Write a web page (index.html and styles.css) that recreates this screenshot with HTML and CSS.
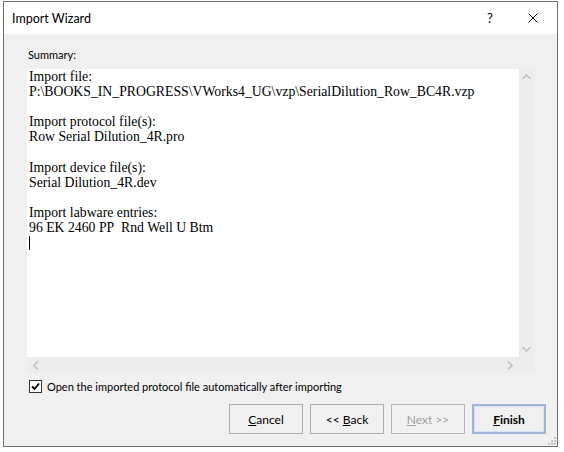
FILE: index.html
```html
<!DOCTYPE html>
<html>
<head>
<meta charset="utf-8">
<link rel="stylesheet" href="styles.css">
</head>
<body>
<div class="window">
  <div class="titlebar">
    <span class="title">Import Wizard</span>
    <span class="help">?</span>
    <span class="close">
      <svg width="10" height="10" viewBox="0 0 10 10"><path d="M0.5 0.5 L9.5 9.5 M9.5 0.5 L0.5 9.5" stroke="#000" stroke-width="1" fill="none"/></svg>
    </span>
  </div>
  <div class="content">
    <div class="label">Summary:</div>
    <div class="textbox">
      <div class="text">
        <p>Import file:<br>P:\BOOKS_IN_PROGRESS\VWorks4_UG\vzp\SerialDilution_Row_BC4R.vzp</p>
        <p>Import protocol file(s):<br>Row Serial Dilution_4R.pro</p>
        <p>Import device file(s):<br>Serial Dilution_4R.dev</p>
        <p>Import labware entries:<br>96 EK 2460 PP&nbsp; Rnd Well U Btm<br><span class="caret"></span></p>
      </div>
      <div class="vscroll">
        <svg width="9" height="6" viewBox="0 0 9 6"><path d="M0.5 5 L4.5 1 L8.5 5" stroke="#c2c2c2" stroke-width="1.6" fill="none"/></svg>
        <svg width="9" height="6" viewBox="0 0 9 6"><path d="M0.5 1 L4.5 5 L8.5 1" stroke="#c2c2c2" stroke-width="1.6" fill="none"/></svg>
      </div>
      <div class="hscroll">
        <svg width="6" height="9" viewBox="0 0 6 9"><path d="M5 0.5 L1 4.5 L5 8.5" stroke="#c2c2c2" stroke-width="1.6" fill="none"/></svg>
        <svg width="6" height="9" viewBox="0 0 6 9"><path d="M1 0.5 L5 4.5 L1 8.5" stroke="#c2c2c2" stroke-width="1.6" fill="none"/></svg>
      </div>
      <div class="corner"></div>
    </div>
    <label class="check">
      <span class="box">
        <svg width="9" height="9" viewBox="0 0 9 9"><path d="M1 4.5 L3.5 7 L8 1.5" stroke="#000" stroke-width="1.8" fill="none"/></svg>
      </span>
      <span>Open the imported protocol file automatically after importing</span>
    </label>
    <div class="buttons">
      <button class="btn"><u>C</u>ancel</button>
      <button class="btn">&lt;&lt; <u>B</u>ack</button>
      <button class="btn disabled"><u>N</u>ext &gt;&gt;</button>
      <button class="btn default"><u>F</u>inish</button>
    </div>
    <div class="grip">
      <svg width="9" height="9" viewBox="0 0 9 9" fill="#c4c4c4"><rect x="6" y="0" width="2" height="2"/><rect x="3" y="3" width="2" height="2"/><rect x="6" y="3" width="2" height="2"/><rect x="0" y="6" width="2" height="2"/><rect x="3" y="6" width="2" height="2"/><rect x="6" y="6" width="2" height="2"/></svg>
    </div>
  </div>
</div>
</body>
</html>
```

FILE: styles.css
```css
* { box-sizing: border-box; }
html, body { margin: 0; padding: 0; background: #ffffff; }
body { font-family: Lato, "Noto Sans", sans-serif; }

.window {
  margin: 1px 0 0 3px;
  width: 555px;
  height: 446px;
  border: 1px solid #6f6f6f;
  display: flex;
  flex-direction: column;
  background: #f0f0f0;
}

.titlebar {
  height: 32px;
  background: #ffffff;
  display: flex;
  align-items: center;
  padding-left: 8px;
  font-size: 12.5px;
  color: #000;
}
.title { flex: 1; }
.help { width: 14px; margin-right: 27px; font-size: 13px; }
.close { width: 10px; height: 10px; margin-right: 19px; display: flex; }

.content {
  flex: 1;
  position: relative;
  padding: 14px 11px 0 23px;
  display: flex;
  flex-direction: column;
}

.label {
  font-size: 11px;
  height: 21px;
  padding-left: 1px;
  color: #000;
}

.textbox {
  width: 507px;
  height: 304px;
  display: grid;
  grid-template-columns: 1fr 15px;
  grid-template-rows: 1fr 16px;
  background: #ffffff;
}
.text {
  padding: 0 0 0 2px;
  font-family: "Liberation Serif", serif;
  font-size: 13.75px;
  line-height: 15.1px;
  color: #000;
  overflow: hidden;
}
.text p { margin: 0 0 15.1px 0; }
.caret {
  display: inline-block;
  width: 1px;
  height: 14px;
  background: #000;
  vertical-align: -3px;
}
.vscroll {
  background: #ededed;
  display: flex;
  flex-direction: column;
  justify-content: space-between;
  align-items: center;
  padding: 5px 0 5px 0;
}
.hscroll {
  background: #ededed;
  display: flex;
  justify-content: space-between;
  align-items: center;
  padding: 0 6px 0 6px;
}
.corner { background: #ededed; }

.check {
  display: flex;
  align-items: center;
  margin-top: 6px;
  height: 15px;
  font-size: 11px;
  color: #000;
}
.box {
  width: 13px;
  height: 13px;
  margin: 0 5px 0 2px;
  border: 1px solid #333;
  background: #fff;
  display: flex;
  align-items: center;
  justify-content: center;
}

.buttons {
  display: flex;
  justify-content: flex-end;
  gap: 7px;
  margin-top: 10px;
}
.btn {
  width: 74px;
  height: 30px;
  border: 1px solid #adadad;
  background: #f0f0f0;
  font-family: Lato, "Noto Sans", sans-serif;
  font-size: 12px;
  color: #000;
  padding: 0;
}
.btn.disabled { color: #a0a0a0; border-color: #b5b5b5; }
.btn.default {
  border: 2px solid #a0b4d8;
  box-shadow: inset 0 0 0 1px #d6e3f5;
  font-weight: bold;
}

.grip {
  position: absolute;
  right: 0;
  bottom: 0;
  width: 9px;
  height: 9px;
  display: flex;
}
```
